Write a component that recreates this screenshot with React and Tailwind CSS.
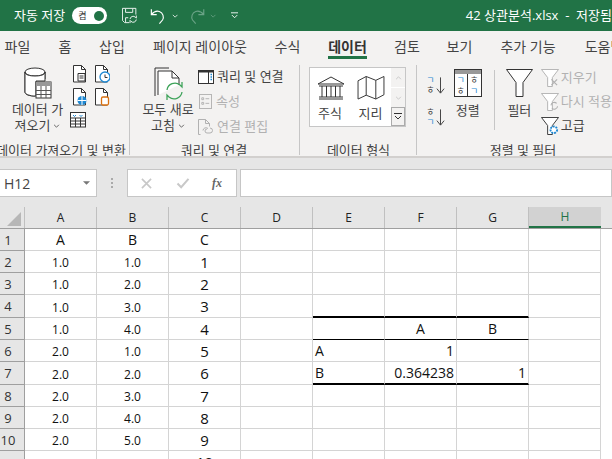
import React from 'react';

const FONT = "font-['Open_Sans','Noto_Sans_CJK_KR',sans-serif]";

const Doc = ({ className = '', children }) => (
  <svg viewBox="0 0 16 18" className={className} fill="none">
    <path d="M1.5 .5h8l4 4v12.500h-12z" fill="#fff" stroke="#333" />
    <path d="M9.500 .5v4h4" stroke="#333" />
    {children}
  </svg>
);

const FunnelPath = ({ stroke = '#333', fill = '#fff' }) => (
  <path d="M.5 .5h18l-6.500 8.500v9.500h-5v-9.500z" fill={fill} stroke={stroke} />
);

const SmallFunnel = ({ stroke, children }) => (
  <svg viewBox="0 0 19 19" className="w-[18px] h-[18px]" fill="none">
    <FunnelPath stroke={stroke} />
    {children}
  </svg>
);

const Chevron = () => (
  <svg viewBox="0 0 8 5" className="inline-block w-[7px] h-[4px] ml-[3px] mb-[2px]" fill="none" stroke="#444"><path d="M1 1l3 3 3-3" /></svg>
);

const SortIcon = ({ top, bottom, topBlue }) => (
  <div className="flex items-center h-[20px]">
    <div className="flex flex-col items-center w-[9px] text-[9px] leading-[10px] font-['Noto_Sans_CJK_KR']">
      <span className={topBlue ? 'text-[#1e88d2]' : 'text-[#444]'}>{top}</span>
      <span className={topBlue ? 'text-[#444]' : 'text-[#1e88d2]'}>{bottom}</span>
    </div>
    <svg viewBox="0 0 10 20" className="w-[9px] h-[19px] ml-[1px]" fill="none" stroke="#333">
      <path d="M5 1v17M1 13.500l4 5 4-5" />
    </svg>
  </div>
);

const Group = ({ w, label, labelClass = '', children }) => (
  <div className={`${w} h-[90px] shrink-0 flex flex-col border-r border-[#c6c6c6]`}>
    <div className="h-[77px] shrink-0 flex">{children}</div>
    <div className={`flex justify-center whitespace-nowrap text-[13px] leading-[16px] text-[#444] ${labelClass}`}>{label}</div>
  </div>
);

const tabs = [
  ['파일', 'w-[35px]'], ['홈', 'w-[60px]'], ['삽입', 'w-[34px]'], ['페이지 레이아웃', 'w-[142px]'], ['수식', 'w-[33px]'],
  ['데이터', 'w-[87px]'], ['검토', 'w-[32px]'], ['보기', 'w-[73px]'], ['추가 기능', 'w-[64px]'], ['도움말', 'w-[88px]'],
];

const rowTall = [
  'h-[22px]', 'h-[22px]', 'h-[22px]', 'h-[23px]', 'h-[22px]', 'h-[22px]', 'h-[23px]', 'h-[22px]', 'h-[22px]', 'h-[22px]', 'h-[22px]',
];

const columns = ['A', 'B', 'C', 'D', 'E', 'F', 'G', 'H'];

const data = [
  ['A', 'B', 'C'],
  ['1.0', '1.0', '1'], ['1.0', '2.0', '2'], ['1.0', '3.0', '3'], ['1.0', '4.0', '4'],
  ['2.0', '1.0', '5'], ['2.0', '2.0', '6'], ['2.0', '3.0', '7'], ['2.0', '4.0', '8'], ['2.0', '5.0', '9'],
  ['', '', '10'],
];

// correlation table sitting in E4:G7
const corr = {
  5: { E: '', F: 'A', G: 'B', align: 'text-center' },
  6: { E: 'A', F: '1', G: '' },
  7: { E: 'B', F: '0.364238', G: '1' },
};

const cellBorder = (row, col) => {
  if (!['E', 'F', 'G'].includes(col)) return 'border-[#d4d4d4]';
  if (row === 4 || row === 7) return 'border-b-2 border-b-black border-r-[#d4d4d4]';
  if (row === 5) return 'border-b-black border-r-[#d4d4d4]';
  return 'border-[#d4d4d4]';
};

const Cell = ({ row, col }) => {
  const idx = columns.indexOf(col);
  let text = '';
  let cls = 'text-center text-[12px] pt-[3px]';
  if (idx < 3) {
    text = data[row - 1][idx];
    if (row === 1) cls = 'text-center text-[14px] pt-[1px]';
    else if (col === 'C') cls = 'text-center text-[15px]';
  } else if (corr[row] && corr[row][col] !== undefined) {
    text = corr[row][col];
    if (col === 'E') cls = 'text-left pl-[2px] text-[14px]';
    else if (row === 5) cls = 'text-center text-[14px]';
    else cls = 'text-right pr-[2px] text-[14px]';
  }
  return (
    <div className={`w-[72px] shrink-0 h-full border-r border-b flex items-center ${cellBorder(row, col)}`}>
      <div className={`w-full leading-[18px] text-[#111] ${cls}`}>{text}</div>
    </div>
  );
};

const App = () => {
  return (
    <div className={`w-[612px] h-[459px] overflow-hidden bg-white ${FONT}`}>
      {/* title bar */}
      <div className="h-[31px] bg-[#217346] flex items-center text-white">
        <span className="ml-[14px] w-[52px] text-[13px] whitespace-nowrap">자동 저장</span>
        <div className="ml-[7px] w-[38px] h-[17px] rounded-full bg-white flex items-center justify-between px-[3px]">
          <span className="text-[9px] text-[#333] ml-[3px]">켬</span>
          <span className="w-[10px] h-[10px] rounded-full bg-[#217346]" />
        </div>
        <svg viewBox="0 0 17 17" className="ml-[15px] w-[17px] h-[17px]" fill="none" stroke="#fff">
          <path d="M8 16.500h-5l-2.500-2.500v-13.500h15v7" />
          <path d="M4 1v4h8v-4M4 16v-5h3" />
          <path d="M9 12.500a3.500 3.500 0 0 1 6-2l1 1v-3M16 13a3.500 3.500 0 0 1-6 2l-1-1v3" />
        </svg>
        <svg viewBox="0 0 18 18" className="ml-[13px] w-[18px] h-[18px]" fill="none" stroke="#fff" strokeWidth="1.300">
          <path d="M1.500 1.500v6h6M1.500 7.500c3-3.500 6-4.500 9-3.500 4 1.500 5.500 6 3.500 9.500l-3.500 4" />
        </svg>
        <svg viewBox="0 0 8 5" className="ml-[6px] w-[7px] h-[4px]" fill="none" stroke="#fff"><path d="M1 1l3 3 3-3" /></svg>
        <svg viewBox="0 0 18 18" className="ml-[11px] w-[18px] h-[18px]" fill="none" stroke="#6aa386" strokeWidth="1.300">
          <path d="M16.500 1.500v6h-6M16.500 7.500c-3-3.500-6-4.500-9-3.500-4 1.500-5.500 6-3.500 9.500l3.500 4" />
        </svg>
        <svg viewBox="0 0 8 5" className="ml-[5px] w-[7px] h-[4px]" fill="none" stroke="#6aa386"><path d="M1 1l3 3 3-3" /></svg>
        <svg viewBox="0 0 8 7" className="ml-[14px] w-[8px] h-[7px]" fill="none" stroke="#fff"><path d="M0 .5h8M1 3l3 3 3-3" /></svg>
        <span className="ml-[228px] text-[13px] whitespace-nowrap">42 상관분석.xlsx&nbsp; -&nbsp; 저장됨</span>
      </div>

      {/* tabs */}
      <div className="h-[31px] bg-[#f3f2f1] flex items-center text-[14px] text-[#444] whitespace-nowrap overflow-hidden">
        {tabs.map(([name, w]) => (
          name === '데이터' ? (
            <div key={name} className={`${w} shrink-0 flex justify-center`}>
              <span className="relative font-bold text-[#333]">
                {name}
                <span className="absolute left-0 right-0 top-[20px] h-[3px] bg-[#217346]" />
              </span>
            </div>
          ) : (
            <div key={name} className={`${w} shrink-0 text-center`}>{name}</div>
          )
        ))}
      </div>

      {/* ribbon */}
      <div className="h-[96px] bg-[#f3f2f1] border-b-2 border-[#d2d0ce] flex pt-[3px] text-[13px] text-[#444] overflow-hidden">
        <Group w="w-[130px]" label="데이터 가져오기 및 변환" labelClass="pr-[7px]">
          <div className="w-[66px] flex flex-col items-center pl-[9px]">
            <svg viewBox="0 0 28 33" className="w-[28px] h-[33px] mt-[2px]" fill="none">
              <path d="M1 5v20c0 3 5 4 10 4M21 5v7" stroke="#333" />
              <ellipse cx="11" cy="5" rx="10" ry="4" fill="#fff" stroke="#333" />
              <path d="M1 5v20c0 2 4 3.500 8 4h3V14h9V5c0 3-5 4-10 4S1 8 1 5z" fill="#fff" stroke="#333" />
              <rect x="12" y="15" width="15" height="16" fill="#fff" stroke="#333" />
              <rect x="12" y="15" width="15" height="4" fill="#999" />
              <path d="M12 23.500h15M12 27.500h15M17 19v12M22 19v12" stroke="#555" />
            </svg>
            <div className="mt-[1px] leading-[16px] text-center whitespace-nowrap">데이터 가<br />져오기<Chevron /></div>
          </div>
          <div className="ml-[6px] flex flex-col">
            <div className="flex gap-[6px]">
              <Doc className="w-[16px] h-[18px]"><path d="M6 8.500h7v7.500h-7zM7.500 11h4M7.500 13h4" stroke="#333" fill="#fff" /></Doc>
              <Doc className="w-[16px] h-[18px]"><circle cx="11" cy="12" r="5" fill="#fff" stroke="#1e88d2" strokeWidth="1.300" /><path d="M11 9.500v3h2.500" stroke="#333" /></Doc>
            </div>
            <div className="flex gap-[6px] mt-[5px]">
              <Doc className="w-[16px] h-[18px]"><circle cx="10" cy="12.500" r="4.500" fill="#1e88d2" /><path d="M5.500 12.500h9M10 8v9" stroke="#fff" /></Doc>
              <Doc className="w-[16px] h-[18px]"><rect x="7.500" y="9" width="7" height="8" rx="1.500" fill="#fff" stroke="#d9700f" strokeWidth="1.300" /></Doc>
            </div>
            <svg viewBox="0 0 16 16" className="w-[16px] h-[16px] mt-[6px] -ml-[2px]" fill="none" stroke="#333">
              <rect x=".5" y=".5" width="15" height="14.500" fill="#fff" />
              <path d="M.5 6h15M.5 9h15M.5 12h15M5.500 6v9M10.500 6v9" />
              <path d="M3 3l1.500 1.500L6 3M9.500 3L11 4.500 12.500 3" stroke="#1e88d2" />
            </svg>
          </div>
        </Group>

        <Group w="w-[170px]" label="쿼리 및 연결" labelClass="pr-[1px]">
          <div className="w-[68px] flex flex-col items-center pl-[8px] shrink-0">
            <svg viewBox="0 0 30 33" className="w-[30px] h-[33px] ml-[1px] mt-[2px]" fill="none">
              <path d="M1 29V1h14" stroke="#333" />
              <path d="M4 28V4h14l7 7v7" stroke="#333" fill="#fff" />
              <path d="M18 4v7h7" stroke="#333" />
              <path d="M13 23a8 8 0 0 1 13-5l2 2v-5M28 25a8 8 0 0 1-13 5l-2-2v5" stroke="#3ea35a" strokeWidth="1.300" />
            </svg>
            <div className="mt-[1px] leading-[16px] text-center whitespace-nowrap">모두 새로<br />고침<Chevron /></div>
          </div>
          <div className="mt-[2px] flex flex-col gap-[6px] whitespace-nowrap">
            <div className="flex items-center gap-[3px] h-[19px]">
              <svg viewBox="0 0 16 14" className="w-[16px] h-[14px]" fill="none">
                <rect x=".5" y=".5" width="15" height="13" fill="#fff" stroke="#333" />
                <path d="M.5 1.500h15" stroke="#333" strokeWidth="2" />
                <path d="M10.500 2v11" stroke="#333" />
                <path d="M12.500 4.500h1.500M12.500 7h1.500M12.500 9.500h1.500" stroke="#1e88d2" strokeWidth="1.300" />
              </svg>
              <span>쿼리 및 연결</span>
            </div>
            <div className="flex items-center gap-[4px] h-[19px] text-[#b1b1b1]">
              <svg viewBox="0 0 14 16" className="w-[13px] h-[15px] ml-[1px]" fill="none" stroke="#b1b1b1">
                <rect x=".5" y=".5" width="13" height="15" />
                <path d="M3 4h2v2h-2zM3 9h2v2h-2zM7 5h4M7 10h4" />
              </svg>
              <span>속성</span>
            </div>
            <div className="flex items-center gap-[4px] h-[19px] text-[#b1b1b1]">
              <svg viewBox="0 0 15 16" className="w-[15px] h-[16px]" fill="none" stroke="#b1b1b1">
                <path d="M2.500 15.500h-2v-15h7l4 4v3" />
                <path d="M7.500 .5v4h4" />
                <path d="M5 11.500a3 3 0 0 1 5-2M12 9a2.500 2.500 0 0 1 0 5h-3a2 2 0 0 1 0-4" />
              </svg>
              <span>연결 편집</span>
            </div>
          </div>
        </Group>

        <Group w="w-[117px]" label="데이터 형식" labelClass="pl-[1px]">
          <div className="ml-[9px] mt-[2px] w-[97px] h-[60px] flex border border-[#c6c6c6] bg-white">
            <div className="w-[81px] flex pt-[8px]">
              <div className="w-[40px] flex flex-col items-center">
                <svg viewBox="0 0 28 24" className="w-[28px] h-[24px] ml-[1px]" fill="none" stroke="#333">
                  <path d="M1 8L14 1l13 7zM2 10h24M2 23h24M2 21h24M5 10v11M9.500 10v11M14 10v11M18.500 10v11M23 10v11" />
                </svg>
                <span className="mt-[5px] leading-[16px]">주식</span>
              </div>
              <div className="w-[41px] flex flex-col items-center">
                <svg viewBox="0 0 28 25" className="w-[28px] h-[24px]" fill="none" stroke="#333">
                  <path d="M.5 5L9 .5l10 4 8.500-4v19L19 24 9 20 .5 24zM9 .5V20M19 4.500V24" />
                </svg>
                <span className="mt-[5px] leading-[16px]">지리</span>
              </div>
            </div>
            <div className="w-[14px] flex flex-col">
              <div className="h-[20px] bg-[#f3f2f1] border-b border-white flex items-center justify-center">
                <svg viewBox="0 0 8 5" className="w-[7px] h-[4px]" fill="none" stroke="#c0c0c0"><path d="M1 4l3-3 3 3" /></svg>
              </div>
              <div className="h-[19px] bg-[#f3f2f1] flex items-center justify-center">
                <svg viewBox="0 0 8 5" className="w-[7px] h-[4px]" fill="none" stroke="#c0c0c0"><path d="M1 1l3 3 3-3" /></svg>
              </div>
              <div className="flex-1 bg-[#f3f2f1] border border-[#ababab] flex items-center justify-center">
                <svg viewBox="0 0 8 7" className="w-[8px] h-[7px]" fill="none" stroke="#333"><path d="M0 .5h8M1 3l3 3 3-3" /></svg>
              </div>
            </div>
          </div>
        </Group>

        <div className="w-[195px] h-[90px] shrink-0 flex flex-col whitespace-nowrap">
          <div className="h-[77px] shrink-0 flex">
            <div className="ml-[9px] mt-[10px] w-[28px] flex flex-col gap-[12px]">
              <SortIcon top="ㄱ" bottom="ㅎ" topBlue />
              <SortIcon top="ㅎ" bottom="ㄱ" topBlue={false} />
            </div>
            <div className="w-[34px] ml-[1px] flex flex-col items-center">
              <div className="mt-[4px] w-[28px] h-[28px] flex flex-col border border-[#333] bg-white">
                <div className="h-[4px] bg-[#999]" />
                <div className="flex-1 flex">
                  <div className="w-[13px] border-r border-[#333] flex flex-col items-center text-[9px] leading-[11px] font-['Noto_Sans_CJK_KR']">
                    <span className="text-[#1e88d2]">ㄱ</span><span>ㅎ</span>
                  </div>
                  <div className="flex-1 flex flex-col items-center text-[9px] leading-[11px] font-['Noto_Sans_CJK_KR']">
                    <span>ㅎ</span><span className="text-[#1e88d2]">ㄱ</span>
                  </div>
                </div>
              </div>
              <span className="mt-[5px] leading-[16px]">정렬</span>
            </div>
            <div className="ml-[11px] w-[1px] h-[60px] mt-[5px] bg-[#c6c6c6]" />
            <div className="w-[54px] flex flex-col items-center">
              <svg viewBox="0 0 27 28" className="w-[27px] h-[28px] mt-[4px]" fill="none">
                <path d="M.5 .5h26l-9.500 13v14h-7v-14z" fill="#fff" stroke="#333" />
              </svg>
              <span className="mt-[5px] leading-[16px]">필터</span>
            </div>
            <div className="flex flex-col gap-[4px] mt-[3px] ml-[-3px]">
              <div className="flex items-center h-[20px] text-[#b1b1b1] gap-[2px]">
                <SmallFunnel stroke="#b1b1b1"><path d="M11 11l6 6M17 11l-6 6" stroke="#b1b1b1" strokeWidth="1.300" /></SmallFunnel>
                <span>지우기</span>
              </div>
              <div className="flex items-center h-[20px] text-[#b1b1b1] gap-[2px]">
                <SmallFunnel stroke="#b1b1b1"><path d="M10.500 13a3.500 3.500 0 0 1 6-2M17.500 14a3.500 3.500 0 0 1-6 2" stroke="#b1b1b1" strokeWidth="1.200" /></SmallFunnel>
                <span>다시 적용</span>
              </div>
              <div className="flex items-center h-[20px] gap-[2px]">
                <SmallFunnel stroke="#333">
                  <circle cx="13.500" cy="13.500" r="3.500" fill="#fff" stroke="#1e88d2" strokeWidth="2" strokeDasharray="2 1" />
                </SmallFunnel>
                <span>고급</span>
              </div>
            </div>
          </div>
          <div className="pl-[17px] flex justify-center text-[13px] leading-[16px]">정렬 및 필터</div>
        </div>
      </div>

      {/* formula bar */}
      <div className="h-[49px] bg-[#e6e6e6] pt-[11px] flex items-start">
        <div className="w-[98px] h-[28px] -ml-[1px] border border-[#c6c6c6] bg-white flex items-center justify-between pl-[4px] pr-[6px] shrink-0">
          <span className="text-[14px] text-[#444]">H12</span>
          <svg viewBox="0 0 8 4" className="w-[7px] h-[4px]"><path d="M0 0h8l-4 4z" fill="#777" /></svg>
        </div>
        <div className="w-[30px] h-[28px] flex flex-col items-center justify-center gap-[2px] shrink-0">
          <span className="w-[2px] h-[2px] bg-[#aaa]" /><span className="w-[2px] h-[2px] bg-[#aaa]" /><span className="w-[2px] h-[2px] bg-[#aaa]" />
        </div>
        <div className="w-[110px] h-[28px] border border-[#c6c6c6] bg-white flex items-center shrink-0">
          <svg viewBox="0 0 12 12" className="ml-[13px] w-[11px] h-[11px]" fill="none" stroke="#c8c8c8" strokeWidth="1.800"><path d="M1 1l10 10M11 1L1 11" /></svg>
          <svg viewBox="0 0 14 12" className="ml-[24px] w-[14px] h-[11px]" fill="none" stroke="#c8c8c8" strokeWidth="2.200"><path d="M1 6l4 4 8-9" /></svg>
          <span className="ml-[22px] text-[12px] italic font-bold text-[#666] font-['Liberation_Serif',serif]">fx</span>
        </div>
        <div className="ml-[3px] flex-1 h-[28px] border border-[#c6c6c6] bg-white" />
      </div>

      {/* column headers */}
      <div className="h-[22px] flex bg-[#e6e6e6] border-b border-[#9f9f9f]">
        <div className="w-[25px] h-full shrink-0 border-r border-[#c0c0c0] flex items-end justify-end pr-[3px] pb-[2px]">
          <svg viewBox="0 0 14 14" className="w-[14px] h-[14px]"><path d="M14 0v14H0z" fill="#b7b7b7" /></svg>
        </div>
        {columns.map((c) => (
          <div key={c} className={`w-[72px] shrink-0 h-full flex items-center justify-center text-[12px] ${c === 'H' ? 'bg-[#d2d2d2] border-b-2 border-[#217346] text-[#217346] -mb-px h-[22px]' : 'border-r border-[#c0c0c0] text-[#222]'}`}>{c}</div>
        ))}
      </div>

      {/* sheet rows */}
      {rowTall.map((h, i) => (
        <div key={i} className={`${h} flex`}>
          <div className="w-[25px] shrink-0 h-full bg-[#e6e6e6] border-r border-b border-r-[#9f9f9f] border-b-[#9f9f9f] flex items-center">
            <span className="w-[16px] pt-[2px] text-center text-[13px] text-[#333]">{i < 10 ? i + 1 : ''}</span>
          </div>
          {columns.map((c) => (
            <Cell key={c} row={i + 1} col={c} />
          ))}
        </div>
      ))}
    </div>
  );
};

export default App;
